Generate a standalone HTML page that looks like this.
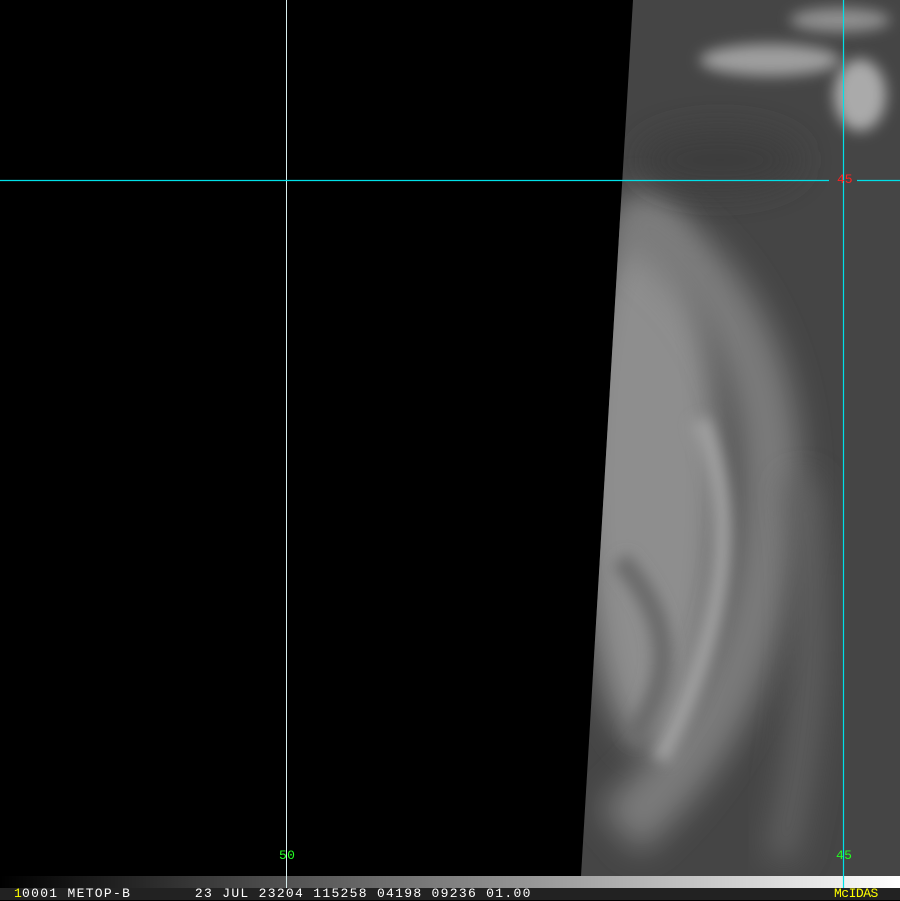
<!DOCTYPE html>
<html><head><style>
html,body{margin:0;padding:0;background:#000;width:900px;height:900px;overflow:hidden}
.t{position:absolute;font-family:"Liberation Mono",monospace;font-size:13px;line-height:12px}
</style></head><body>
<svg width="900" height="900" style="position:absolute;left:0;top:0">
<defs>
<linearGradient id="bar" x1="0" x2="1"><stop offset="0" stop-color="#000"/><stop offset="1" stop-color="#fff"/></linearGradient>
<filter id="b" x="-100%" y="-100%" width="300%" height="300%"><feGaussianBlur stdDeviation="16"/></filter>
<filter id="b2" x="-100%" y="-100%" width="300%" height="300%"><feGaussianBlur stdDeviation="7"/></filter>
<clipPath id="c"><polygon points="633,0 900,0 900,876 581,876"/></clipPath>
</defs>
<polygon points="633,0 900,0 900,876 581,876" fill="#454545"/>
<g clip-path="url(#c)">
<ellipse cx="650" cy="480" rx="70" ry="270" fill="#8e8e8e" filter="url(#b)"/>
<path d="M620 210 Q770 300 770 480 Q770 700 620 830" stroke="#7c7c7c" stroke-width="60" fill="none" filter="url(#b)"/>
<path d="M700 420 Q760 560 660 760" stroke="#a0a0a0" stroke-width="18" fill="none" filter="url(#b2)"/>
<path d="M620 560 Q700 650 630 740" stroke="#6a6a6a" stroke-width="20" fill="none" filter="url(#b2)"/>
<path d="M800 480 Q830 650 780 860" stroke="#626262" stroke-width="30" fill="none" filter="url(#b)"/>
<ellipse cx="770" cy="60" rx="70" ry="16" fill="#9e9e9e" filter="url(#b2)"/>
<ellipse cx="860" cy="95" rx="26" ry="36" fill="#aaa" filter="url(#b2)"/>
<ellipse cx="840" cy="20" rx="50" ry="12" fill="#909090" filter="url(#b2)"/>
<ellipse cx="720" cy="160" rx="80" ry="30" fill="#3c3c3c" filter="url(#b)"/>
</g>
<rect x="0" y="876" width="900" height="12" fill="url(#bar)"/>
<rect x="0" y="888" width="900" height="12" fill="#222"/>
<line x1="286.5" y1="0" x2="286.5" y2="888" stroke="#d8eeee" stroke-width="1"/>
<line x1="843.5" y1="0" x2="843.5" y2="888" stroke="#00e0e8" stroke-width="1.2"/>
<line x1="0" y1="180.5" x2="829" y2="180.5" stroke="#00e0e8" stroke-width="1.2"/>
<line x1="857" y1="180.5" x2="900" y2="180.5" stroke="#00e0e8" stroke-width="1.2"/>
</svg>
<div class="t" style="left:279px;top:850px;color:#2f2;letter-spacing:0.3px">50</div>
<div class="t" style="left:836px;top:850px;color:#2f2;letter-spacing:0.3px">45</div>
<div class="t" style="left:837px;top:174px;color:#f22">45</div>
<div class="t" style="left:14px;top:888px;color:#ff0">1</div>
<div class="t" style="left:22px;top:888px;color:#fff;white-space:pre;letter-spacing:1.3px">0001 METOP-B       23 JUL 23204 115258 04198 09236 01.00</div>
<div class="t" style="left:834px;top:888px;color:#ff0;letter-spacing:-0.5px">McIDAS</div>
</body></html>
